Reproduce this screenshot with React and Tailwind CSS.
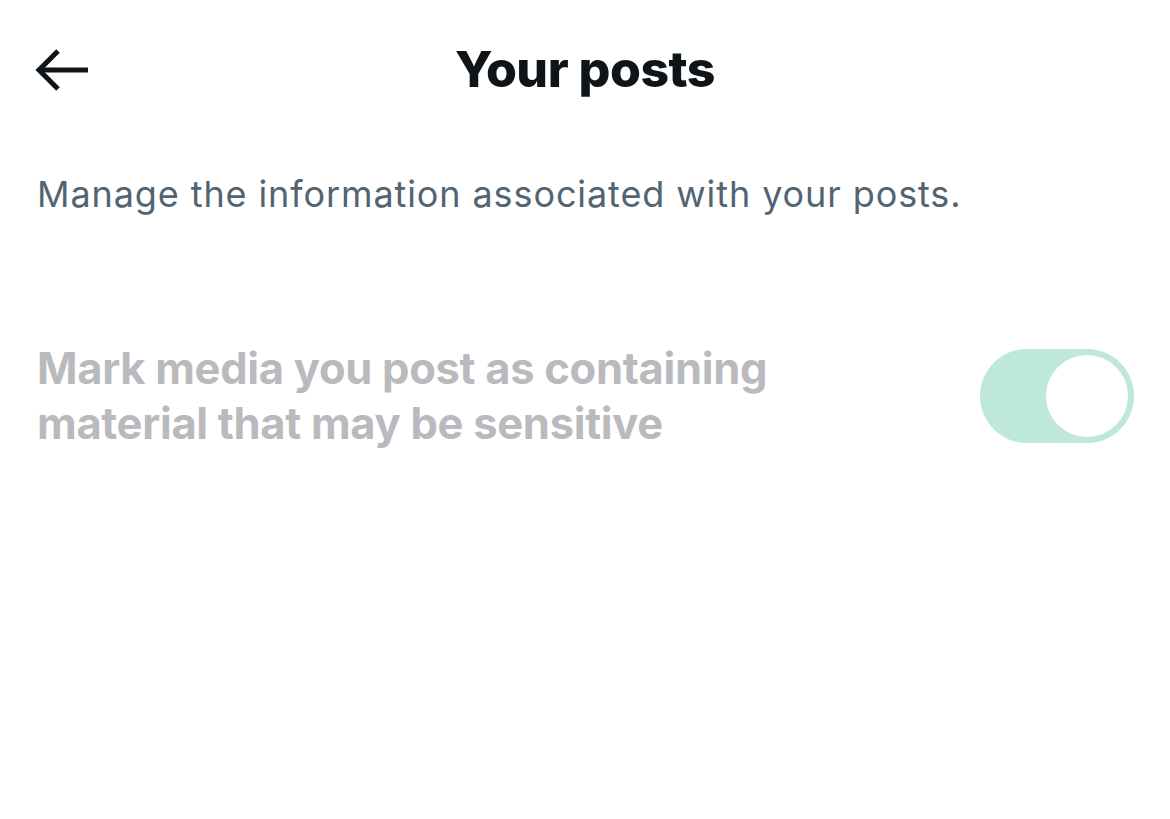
import React from "react";

const BackArrow = () => (
  <svg width="56" height="48" viewBox="0 0 56 48" fill="none" stroke="#0f1419" strokeWidth="5" strokeLinecap="butt" strokeLinejoin="miter">
    <path d="M54 24H6" />
    <path d="M24 5L5 24l19 19" />
  </svg>
);

const Toggle = () => (
  <div className="w-[154px] h-[94px] rounded-full bg-[#bee8d8] flex items-center justify-end pr-[6px]">
    <div className="w-[82px] h-[82px] rounded-full bg-white" />
  </div>
);

const App = () => {
  return (
    <div className="w-[1170px] h-[819px] bg-white" style={{ fontFamily: "Inter, 'Liberation Sans', sans-serif" }}>
      <div className="relative flex items-center justify-center h-[140px]">
        <button className="absolute left-[34px] top-[46px]">
          <BackArrow />
        </button>
        <h1 className="text-[50px] font-extrabold text-[#0f1419] tracking-[-0.5px] -mt-[2px]">Your posts</h1>
      </div>

      <div className="px-[37px]">
        <p className="text-[36px] leading-[44px] text-[#536471] tracking-[0.9px] mt-[32px]">
          Manage the information associated with your posts.
        </p>

        <div className="flex items-center justify-between mt-[125px]">
          <div className="text-[43.5px] leading-[55px] font-bold text-[#b9babe] tracking-[-0.3px]">
            Mark media you post as containing
            <br />
            material that may be sensitive
          </div>
          <div className="-mr-[1px]">
            <Toggle />
          </div>
        </div>
      </div>
    </div>
  );
};

export default App;
